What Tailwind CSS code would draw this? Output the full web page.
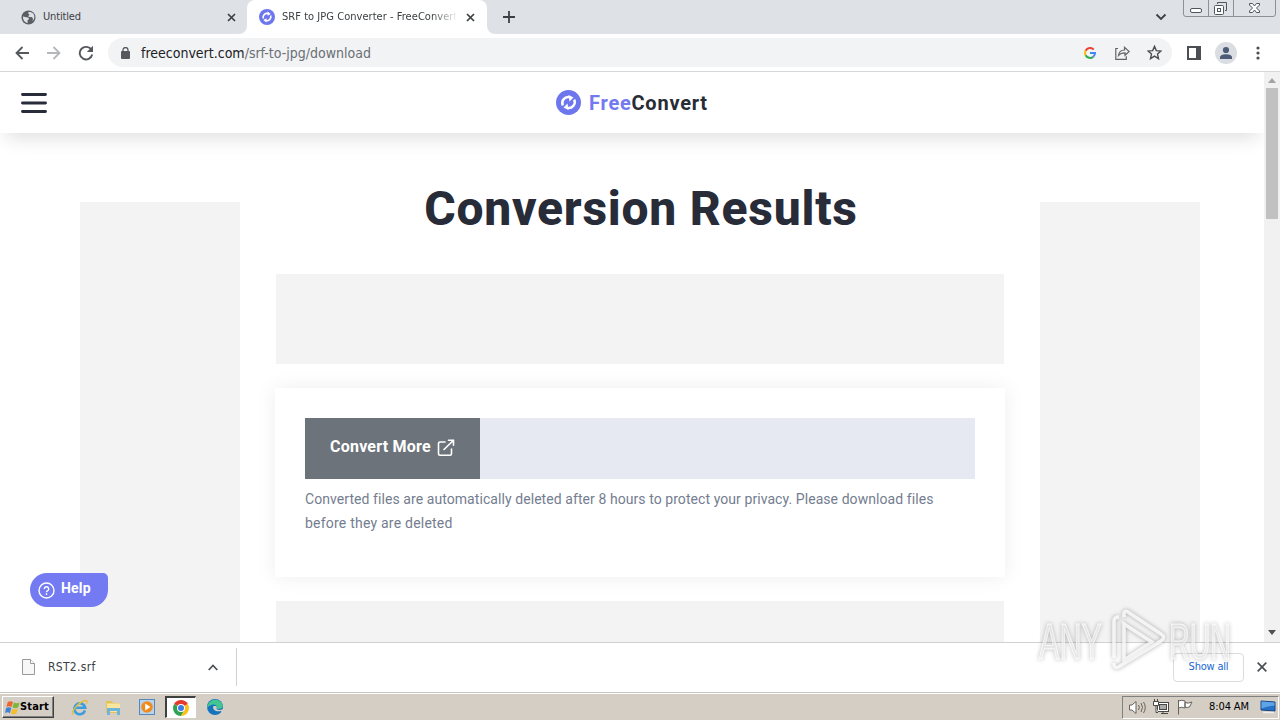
<!DOCTYPE html>
<html lang="en">
<head>
  <meta charset="UTF-8" />
  <meta name="viewport" content="width=device-width, initial-scale=1" />
  <title>SRF to JPG Converter - FreeConvert.com</title>
  <script src="https://cdn.jsdelivr.net/npm/@tailwindcss/browser@4"></script>
</head>
<body class="relative w-[1280px] h-[720px] overflow-hidden flex flex-col bg-white font-['DejaVu_Sans_Condensed','DejaVu_Sans',sans-serif] [font-stretch:condensed]">

  <!-- TAB STRIP -->
  <div class="h-[34px] shrink-0 flex bg-[#dee1e6] text-[#3c4043] text-[11px]">
    <div class="w-[247px] flex items-center pl-[21px]">
      <svg class="w-[15px] h-[15px]" viewBox="0 0 16 16"><circle cx="8" cy="8" r="7.5" fill="#5b5f64"/><path d="M2 7c2 0 3 1 5 1s2 2 0 3v3C4 13.500 2 11 2 7zM8 2c-1 2 1 2 1 3s-2 1-1 2 3 0 4 1 1 2 0 4c3-2 3-7 0-9-1-1-3-1-4-1z" fill="#dee1e6"/></svg>
      <span class="ml-[7px] w-[184px] pt-px tracking-[-0.15px]">Untitled</span>
      <svg class="w-[9px] h-[9px]" viewBox="0 0 9 9"><path d="M1 1l7 7M8 1L1 8" stroke="#3c4043" stroke-width="1.700"/></svg>
    </div>
    <div class="relative w-[240px] flex items-center pl-3 bg-white rounded-t-lg">
      <svg class="absolute -left-2 bottom-0 w-2 h-2" viewBox="0 0 8 8"><path d="M8 0v8H0a8 8 0 0 0 8-8z" fill="#fff"/></svg>
      <svg class="absolute -right-2 bottom-0 w-2 h-2" viewBox="0 0 8 8"><path d="M0 0v8h8a8 8 0 0 1-8-8z" fill="#fff"/></svg>
      <svg class="w-4 h-4" viewBox="0 0 26 26"><circle cx="13" cy="13" r="13" fill="#6e76ee"/><path d="M7 15.500a6.500 6.500 0 0 1 8.500-8M19 10.500a6.500 6.500 0 0 1-8.500 8" fill="none" stroke="#fff" stroke-width="2.600"/><path d="M14 4l5 4-5 3zM12 22l-5-4 5-3z" fill="#fff"/></svg>
      <span class="ml-[7px] w-[176px] pt-px whitespace-nowrap tracking-[0.04px] [mask-image:linear-gradient(to_right,black_85%,transparent)]">SRF to JPG Converter - FreeConvert</span>
      <svg class="ml-2 w-[9px] h-[9px]" viewBox="0 0 9 9"><path d="M1 1l7 7M8 1L1 8" stroke="#3c4043" stroke-width="1.700"/></svg>
    </div>
    <svg class="ml-4 mt-[11px] w-3 h-3" viewBox="0 0 12 12"><path d="M6 0v12M0 6h12" stroke="#3c4043" stroke-width="1.800"/></svg>
    <svg class="ml-auto mt-[13px] w-[12px] h-[8px]" viewBox="0 0 12 8"><path d="M1.500 1.500L6 6l4.500-4.500" fill="none" stroke="#3c4043" stroke-width="1.800"/></svg>
    <!-- window buttons -->
    <svg class="ml-4 mr-1 w-[93px] h-[17px]" viewBox="0 0 93 17" fill="none">
      <path d="M.5 0v14q0 2.500 2.500 2.500h87q2.500 0 2.500-2.500V0M25.500 0v16M50.500 0v16" stroke="#8c9097"/>
      <rect x="7.500" y="8.500" width="11" height="4" rx="1.500" fill="#fff" stroke="#50545c"/>
      <path d="M34.500 4V2.500h9v8H42" stroke="#50545c"/>
      <rect x="31.500" y="5.500" width="9" height="9" rx="1" fill="#fff" stroke="#50545c"/><rect x="34.500" y="8.500" width="3" height="3" stroke="#50545c"/>
      <path d="M66.500 3.500h3l2 2.500 2-2.500h3v1.500L73.500 8l3 3v1.500h-3l-2-2.500-2 2.500h-3V11l3-3-3-3z" fill="#fff" stroke="#50545c"/>
    </svg>
  </div>

  <!-- TOOLBAR -->
  <div class="h-[38px] shrink-0 flex items-center pl-[15px] border-b border-[#d5d7da] bg-white">
    <svg class="w-[14px] h-[14px]" viewBox="0 0 14 14"><path d="M14 7H1.500M7.500 1L1.500 7l6 6" fill="none" stroke="#55585c" stroke-width="1.800"/></svg>
    <svg class="ml-[18px] w-[14px] h-[14px]" viewBox="0 0 14 14"><path d="M0 7h12.500M6.500 1l6 6-6 6" fill="none" stroke="#b5b7ba" stroke-width="1.800"/></svg>
    <svg class="ml-[17px] w-[16px] h-[16px]" viewBox="0 0 16 16"><path d="M13.500 5A6.300 6.300 0 1 0 14.200 9.500" fill="none" stroke="#55585c" stroke-width="1.900"/><path d="M15 .8V7H8.800z" fill="#55585c"/></svg>
    <div class="ml-[14px] w-[1064px] h-[29px] flex items-center rounded-full bg-[#f1f3f4] pl-[13px] text-[14px]">
      <svg class="w-[9px] h-3" viewBox="0 0 9 12"><rect y="4" width="9" height="8" rx="1" fill="#55585c"/><path d="M2 5V3a2.500 2.500 0 0 1 5 0v2" fill="none" stroke="#55585c" stroke-width="1.300"/></svg>
      <span class="ml-[11px] pt-px text-[#202124] whitespace-nowrap">freeconvert.com<span class="text-[#6b6f74]">/srf-to-jpg/download</span></span>
      <svg class="ml-auto w-[12px] h-[12px]" viewBox="0 0 12 12" fill="none" stroke-width="2"><path d="M9.700 2.600A5 5 0 0 0 1.600 3.700" stroke="#ea4335"/><path d="M1.600 3.700a5 5 0 0 0 0 4.600" stroke="#fbbc05"/><path d="M1.600 8.300a5 5 0 0 0 7.700 1.400" stroke="#34a853"/><path d="M9.300 9.700A5 5 0 0 0 11 6H6" stroke="#4285f4"/></svg>
      <svg class="ml-[19px] w-[15px] h-[14px]" viewBox="0 0 15 14" fill="none" stroke="#5f6368" stroke-width="1.200"><path d="M3 2.500H.8v10.800h10.500v-3M3.500 9.500c.5-4 3-5.500 6-5.500V1.300L14.200 5.500 10 9.300V6.800c-3 0-5 .8-6.500 2.700z"/></svg>
      <svg class="ml-[17px] mr-[10px] w-[15px] h-[15px]" viewBox="0 0 15 15"><path d="M7.500 1.300l1.800 4.300 4.700.4-3.500 3.100 1 4.600-4-2.500-4 2.500 1-4.600L1 6l4.700-.4z" fill="none" stroke="#4b4f54" stroke-width="1.400"/></svg>
    </div>
    <svg class="ml-[15px] w-[14px] h-[14px]" viewBox="0 0 14 14"><rect x="1" y="1" width="12" height="12" fill="none" stroke="#4b4f54" stroke-width="2"/><rect x="9" y="1" width="4" height="12" fill="#4b4f54"/></svg>
    <svg class="ml-[14px] w-[22px] h-[22px]" viewBox="0 0 22 22"><circle cx="11" cy="11" r="11" fill="#dadde2"/><circle cx="11" cy="8" r="3.100" fill="#4d5b77"/><path d="M5 17v-1.500C5 13 8.500 12.300 11 12.300s6 .7 6 3.200V17z" fill="#4d5b77"/></svg>
    <svg class="ml-[19px] w-1 h-[14px]" viewBox="0 0 4 14" fill="#4b4f54"><circle cx="2" cy="2" r="1.600"/><circle cx="2" cy="7" r="1.600"/><circle cx="2" cy="12" r="1.600"/></svg>
  </div>

  <!-- WEB PAGE -->
  <div class="h-[570px] shrink-0 flex overflow-hidden">
    <div class="relative w-[1264px] h-[570px] overflow-hidden font-[Roboto,sans-serif] [font-stretch:normal]">
      <header class="relative h-[61px] flex items-center justify-center bg-white shadow-[0_10px_20px_-6px_rgba(0,0,0,0.14)]">
        <svg class="absolute left-[21px] top-[20px] w-[26px] h-[22px]" viewBox="0 0 26 22"><path d="M1.500 2.500h23M1.500 11h23M1.500 19.500h23" stroke="#282c3a" stroke-width="2.900" stroke-linecap="round"/></svg>
        <svg class="w-[26px] h-[26px]" viewBox="0 0 26 26"><circle cx="12.500" cy="12.500" r="12.500" fill="#6e76ee"/><path d="M6.800 15.500a6 6 0 0 1 7-8.300M18.200 9.500a6 6 0 0 1-7 8.300" fill="none" stroke="#fff" stroke-width="2.400"/><path d="M12.500 5l5 2.500-4 4zM12.500 20l-5-2.500 4-4z" fill="#fff"/></svg>
        <span class="ml-[7px] w-[119px] whitespace-nowrap text-[20px] font-bold tracking-[0.76px] text-[#282c35]"><span class="text-[#737af0]">Free</span>Convert</span>
      </header>

      <main class="flex gap-[35px] pl-20">
        <aside class="mt-[69px] w-40 h-[600px] bg-[#f3f3f3]"></aside>
        <section class="w-[732px] px-px flex flex-col">
          <h1 class="mt-[46px] h-[60px] leading-[60px] text-center whitespace-nowrap text-[48px] font-extrabold tracking-[0.75px] text-[#282c39]">Conversion Results</h1>
          <div class="mt-[35px] w-[728px] h-[90px] bg-[#f3f3f3]"></div>
          <div class="mt-6 -ml-px w-[730px] h-[189px] p-[30px] bg-white shadow-[0_0_20px_rgba(0,0,0,0.07)]">
            <div class="h-[61px] bg-[#e6e9f2]">
              <div class="w-[175px] h-[61px] flex items-center pl-[25px] pb-1 bg-[#6c737b] text-white">
                <span class="w-[101px] whitespace-nowrap text-[16px] font-bold tracking-[0.22px]">Convert More</span>
                <svg class="ml-[6px] mt-[3px] w-[18px] h-[18px]" viewBox="0 0 18 18" fill="none" stroke="#fff" stroke-width="1.600" stroke-linecap="round" stroke-linejoin="round"><path d="M8 3H3Q1.500 3 1.500 4.500v10Q1.500 16.200 3 16.200h10q1.500 0 1.500-1.700V10M7 10.500L16.500 1.300M11.500 1.300h5v5"/></svg>
              </div>
            </div>
            <p class="mt-2 whitespace-nowrap text-[14px] leading-6 tracking-[0.07px] text-[#747d8f]">Converted files are automatically deleted after 8 hours to protect your privacy. Please download files<br><span class="tracking-[0.22px]">before they are deleted</span></p>
          </div>
          <div class="mt-6 w-[728px] h-[90px] bg-[#f3f3f3]"></div>
        </section>
        <aside class="-ml-[2px] mt-[69px] w-40 h-[600px] bg-[#f3f3f3]"></aside>
      </main>

      <!-- help button floats over the page -->
      <div class="absolute left-[30px] top-[501px] w-[78px] h-[34px] flex items-center pl-2 rounded-[17px] rounded-tr-[5px] bg-[#737af2] text-white">
        <svg class="w-[17px] h-[17px]" viewBox="0 0 17 17" fill="none" stroke="#fff" stroke-width="1.400"><circle cx="8.500" cy="8.500" r="7.500"/><path d="M6.300 7a2.200 2.200 0 1 1 3.200 1.900q-1 .4-1 1.300M8.500 11.300v1.600"/></svg>
        <span class="ml-[6px] mb-[3px] text-[14px] font-bold tracking-[0.2px]">Help</span>
      </div>
    </div>

    <!-- scrollbar -->
    <div class="w-4 h-[570px] flex flex-col items-center bg-[#f1f1f1]">
      <svg class="mt-[6px] w-2 h-[5px]" viewBox="0 0 8 5"><path d="M0 5l4-5 4 5z" fill="#a3a3a3"/></svg>
      <div class="mt-[5px] w-3 h-[131px] bg-[#c1c1c1]"></div>
      <svg class="mt-auto mb-[7px] w-2 h-[5px]" viewBox="0 0 8 5"><path d="M0 0h8L4 5z" fill="#505050"/></svg>
    </div>
  </div>

  <!-- DOWNLOAD BAR -->
  <div class="h-[50px] shrink-0 flex items-center border-t border-[#d0d1d3] bg-white pb-px text-[#3c4043]">
    <div class="w-[237px] h-[38px] flex items-center pl-[22px] border-r border-[#d0d1d3]">
      <svg class="w-[13px] h-4" viewBox="0 0 13 16"><path d="M.5.5h8l4 4v11H.5z" fill="#f7f7f7" stroke="#999"/><path d="M8.500.5v4h4" fill="#fff" stroke="#999"/></svg>
      <span class="ml-[13px] text-[12px] tracking-[0.3px]">RST2.srf</span>
      <svg class="ml-auto mr-[18px] w-[10px] h-[7px]" viewBox="0 0 10 7"><path d="M.7 6L5 1.500 9.300 6" fill="none" stroke="#4b4f54" stroke-width="1.700"/></svg>
    </div>
    <div class="ml-auto w-[71px] h-[29px] flex items-center justify-center rounded border border-[#dadce0] text-[11px] tracking-[-0.2px] text-[#1967d2]">Show all</div>
    <svg class="ml-[13px] mr-[13px] w-[10px] h-[10px]" viewBox="0 0 10 10"><path d="M.7.7l8.600 8.600M9.300.7L.7 9.300" stroke="#4b4f54" stroke-width="1.700"/></svg>
  </div>

  <!-- TASKBAR -->
  <div class="h-7 shrink-0 flex items-center border-t border-[#c9c6bf] bg-[#d4cec5] pt-px shadow-[inset_0_1px_0_#fff]">
    <div class="ml-[2px] w-[52px] h-[22px] flex items-center pl-[2px] border border-t-white border-l-white border-r-[#404040] border-b-[#404040] shadow-[inset_-1px_-1px_0_#808080] text-[11px] font-bold text-black">
      <svg class="w-[15px] h-[15px] shrink-0" viewBox="0 0 16 16"><path d="M3 2q3-1.500 5.500 0L7 7.500Q4.500 6 1.500 7.300z" fill="#ee6532"/><path d="M9.500 2.600q3 1.500 6 0L14 8q-3 1.500-6 0z" fill="#7eb53b"/><path d="M1.200 8.500q3-1.500 5.500 0L5.200 14Q3 12.500 0 13.800z" fill="#3e82d4"/><path d="M7.700 9.200q3 1.500 6 0L12.200 14.500q-3 1.500-6 0z" fill="#f5bd2e"/></svg>
      <span class="pt-px tracking-[0.15px]">Start</span>
    </div>
    <svg class="ml-[17px] w-[17px] h-[17px]" viewBox="0 0 17 17" fill="none"><path d="M14 11.500A5.500 5.500 0 1 1 14.200 8.800H4.500" stroke="#3c9fdc" stroke-width="2.600"/><path d="M2 15.500C-1 13 8 3 14 1.500q3-.5 1.500 3" stroke="#e9bd3c" stroke-width="1.400"/></svg>
    <svg class="ml-[17px] w-[17px] h-[17px]" viewBox="0 0 17 17"><path d="M1 2h6l1 2h7v10H1z" fill="#e7c15c"/><path d="M2 4.500h13V13H2z" fill="#f8e6a0"/><path d="M2 9h13v7h-3v-4H5v4H2z" fill="#6fb4dc"/></svg>
    <svg class="ml-[17px] w-[16px] h-[16px]" viewBox="0 0 16 16"><rect x=".5" y=".5" width="15" height="15" fill="#b7d4ee" stroke="#5688bb"/><circle cx="8" cy="8" r="5.800" fill="#f18a1c"/><path d="M6.200 4.500L11.500 8l-5.300 3.500z" fill="#fff"/></svg>
    <div class="ml-[10px] w-[31px] h-[22px] flex items-center justify-center bg-white border-t-2 border-l-2 border-t-[#404040] border-l-[#404040] border-r border-b border-r-white border-b-white">
      <svg class="w-4 h-4" viewBox="0 0 16 16"><path d="M8 8L1.100 4A8 8 0 0 1 14.900 4z" fill="#e33b2e"/><path d="M8 8L1.100 4A8 8 0 0 0 8 16l3.500-6z" fill="#31a350"/><path d="M8 8l6.900-4A8 8 0 0 1 8 16l3.400-6z" fill="#fbc116"/><circle cx="8" cy="8" r="4" fill="#fff"/><circle cx="8" cy="8" r="3" fill="#3b7de8"/></svg>
    </div>
    <svg class="ml-[11px] w-4 h-4" viewBox="0 0 16 16"><circle cx="8" cy="8" r="8" fill="#1673bd"/><path d="M1 5.500C3 0 13-1.500 15.600 6c.8 4-3.500 4.500-6 3.500 1-2-.5-4-3-4S2 7 0 9c0-1 .3-2.500 1-3.500z" fill="#42c590"/><path d="M6.500 7C5 10 8 13.500 14 12l1 1.500L16 10q-4 2-6.500 0 1-1.500-.5-3z" fill="#d4cec5"/></svg>

    <div class="ml-auto w-[157px] h-[23px] flex items-center pl-[6px] mr-px border border-t-[#808080] border-l-[#808080] border-r-white border-b-white text-[11px] text-black">
      <svg class="w-[17px] h-[15px]" viewBox="0 0 17 15" fill="none" stroke="#66625d"><path d="M.5 5H3l4-3.500v12L3 10H.5z" fill="#fff"/><path d="M9.500 5q1.800 2.500 0 5M12 3q3 4.500 0 9M14.500 2q3.500 5.500 0 11"/></svg>
      <svg class="ml-[7px] w-[17px] h-[16px]" viewBox="0 0 17 16" fill="none" stroke="#4a4845"><rect x="4.500" y="3.500" width="11" height="9" fill="#fff"/><rect x="6.500" y="5.500" width="7" height="5" fill="#aaa"/><path d="M8 14.500h7M10 13v1.500"/><path d="M.5 2.500h5v4h-5zM1.500 0v2.500M4.500 0v2.500M3 6.500v7h2" fill="#fff"/></svg>
      <svg class="ml-[7px] w-[16px] h-[16px]" viewBox="0 0 16 16" fill="#fff" stroke="#66625d"><path d="M1.500 1v14.500M1.500 2q3-1.500 6.500 0v7q-3.500-1.500-6.500 0zM8 3.500q3 1.500 7-.5L12.500 8Q10 9 8 8z"/></svg>
      <span class="ml-4 pt-px whitespace-nowrap tracking-[-0.1px]">8:04 AM</span>
      <svg class="ml-auto mr-[2px] w-4 h-[14px]" viewBox="0 0 16 14"><path d="M1 1l14 1v9L1 10z" fill="#2670c6" stroke="#174480"/><path d="M1.500 1.500l13 1v3q-6 0-13 3z" fill="#5ea4e8"/><path d="M3 12.500h11" stroke="#eee" stroke-width="1.500"/></svg>
    </div>
  </div>

  <!-- watermark over everything -->
  <svg class="absolute left-[1030px] top-[600px] w-[210px] h-[80px] drop-shadow-[0_0_2px_rgba(0,0,0,0.4)]" viewBox="0 0 210 80" font-family="Liberation Sans, sans-serif" font-size="50" fill="#fff" fill-opacity="0.5" stroke="#fff" stroke-opacity="0.8" stroke-width="1">
    <text x="9" y="59" textLength="63" lengthAdjust="spacingAndGlyphs">ANY</text>
    <path d="M94 24l28 18-28 18zM84 58V21q0-4 5-4M94 17V14q0-4 4-2l33 22q5 3 0 7L90 66q-6 4-6-3" fill="none" stroke-width="3.500"/>
    <text x="139" y="59" textLength="62" lengthAdjust="spacingAndGlyphs">RUN</text>
  </svg>
</body>
</html>
